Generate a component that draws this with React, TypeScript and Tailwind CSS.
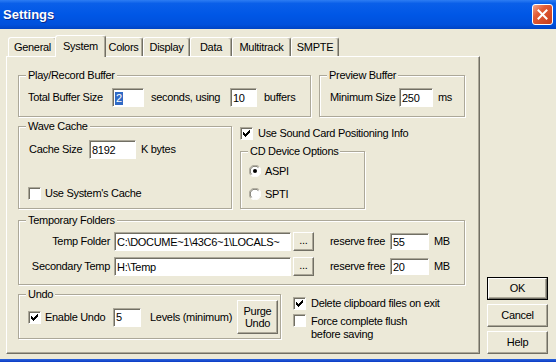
import type { ReactNode } from 'react';

const raised =
  'border border-t-white border-l-white border-r-[#716f64] border-b-[#716f64] shadow-[inset_-1px_-1px_0_#aca899] bg-[#ece9d8]';
const sunken =
  'border border-t-[#aca899] border-l-[#aca899] border-r-white border-b-white shadow-[inset_1px_1px_0_#716f64]';

function Field({ className, children }: { className: string; children?: ReactNode }) {
  return (
    <div className={`${sunken} ${className} flex items-center bg-white pl-[2px] pt-[1px] overflow-hidden whitespace-nowrap shrink-0`}>
      {children}
    </div>
  );
}

function Check({ checked }: { checked?: boolean }) {
  return (
    <span className={`${sunken} w-[13px] h-[13px] bg-white flex items-center justify-center shrink-0`}>
      {checked && (
        <svg width="7" height="7" viewBox="0 0 7 7" shapeRendering="crispEdges">
          <polygon points="0,2 2,4 7,-1 7,2 2,7 0,5" fill="#000" />
        </svg>
      )}
    </span>
  );
}

function Radio({ on }: { on?: boolean }) {
  return (
    <svg width="12" height="12" viewBox="0 0 12 12" className="shrink-0">
      <circle cx="6" cy="6" r="5.5" fill="#fff" />
      <path d="M1.8 10.2 A5.5 5.5 0 0 1 10.2 1.8" stroke="#aca899" fill="none" />
      <path d="M2.6 9.4 A4.5 4.5 0 0 1 9.4 2.6" stroke="#716f64" fill="none" />
      <path d="M10.2 1.8 A5.5 5.5 0 0 1 1.8 10.2" stroke="#fff" fill="none" />
      {on && <circle cx="6" cy="6" r="2" fill="#000" />}
    </svg>
  );
}

function Group({ label, className, children }: { label: string; className: string; children?: ReactNode }) {
  return (
    <div className={`relative border border-[#aca899] shadow-[1px_1px_0_#fff,inset_1px_1px_0_#fff] shrink-0 ${className}`}>
      <span className="absolute -top-[7px] left-[7px] bg-[#ece9d8] px-[2px] whitespace-nowrap">{label}</span>
      {children}
    </div>
  );
}

const tabs = [
  { label: 'General', cls: 'w-[49px] h-[19px]' },
  { label: 'System', cls: 'w-[51px] h-[22px] -mx-[2px] -mb-[1px] relative z-10 bg-[#ece9d8]', active: true },
  { label: 'Colors', cls: 'w-[39px] h-[19px]' },
  { label: 'Display', cls: 'w-[47px] h-[19px]' },
  { label: 'Data', cls: 'w-[42px] h-[19px]' },
  { label: 'Multitrack', cls: 'w-[59px] h-[19px]' },
  { label: 'SMPTE', cls: 'w-[48px] h-[19px]' },
];

export default function App() {
  return (
    <div className="w-[556px] h-[362px] bg-[#ece9d8] flex flex-col overflow-hidden font-['Liberation_Sans',Arial,sans-serif] text-[11px] leading-[13px] tracking-[-0.3px] text-black">
      {/* title bar */}
      <div className="h-[29px] shrink-0 flex items-center justify-between pl-[3px] pr-[3px] bg-[linear-gradient(180deg,#2d7df3_0%,#0a5fe9_12%,#0057e6_50%,#0050dc_85%,#0043c4_100%)]">
        <span className="text-white font-bold text-[13px] tracking-normal [text-shadow:1px_1px_0_#0a2a8a]">Settings</span>
        <div className="w-[21px] h-[21px] rounded-[3px] border border-white bg-[linear-gradient(135deg,#f4a88d_0%,#e35c37_35%,#c63c1b_100%)] flex items-center justify-center">
          <svg width="11" height="11" viewBox="0 0 11 11">
            <path d="M1.5 1.5 L9.5 9.5 M9.5 1.5 L1.5 9.5" stroke="#fff" strokeWidth="2" strokeLinecap="square" />
          </svg>
        </div>
      </div>

      <div className="flex flex-1">
        {/* tab control */}
        <div className="flex flex-col pl-[6px] pt-[6px]">
          <div className="flex items-end h-[21px] pl-[2px]">
            {tabs.map((t) => (
              <div
                key={t.label}
                className={`${t.cls} border-t border-l border-white border-r border-r-[#716f64] shadow-[inset_-1px_0_0_#aca899] rounded-t-[3px] flex items-center justify-center whitespace-nowrap`}
              >
                {t.label}
              </div>
            ))}
          </div>

          <div className="w-[474px] h-[298px] border border-t-white border-l-white border-r-[#716f64] border-b-[#716f64] shadow-[inset_-1px_-1px_0_#aca899] flex flex-col pl-[11px]">
            {/* buffers */}
            <div className="flex items-start mt-[18px]">
              <Group label="Play/Record Buffer" className="w-[293px] h-[42px]">
                <div className="flex items-center pl-[9px] mt-[12px]">
                  <span className="w-[84px] whitespace-nowrap">Total Buffer Size</span>
                  <Field className="w-[32px] h-[19px]">
                    <span className="bg-[#316ac5] text-white px-[1px]">2</span>
                  </Field>
                  <span className="w-[86px] pl-[7px] whitespace-nowrap">seconds, using</span>
                  <Field className="w-[27px] h-[19px]">10</Field>
                  <span className="pl-[7px]">buffers</span>
                </div>
              </Group>
              <Group label="Preview Buffer" className="w-[146px] h-[42px] ml-[8px]">
                <div className="flex items-center pl-[10px] mt-[12px]">
                  <span className="w-[69px] whitespace-nowrap">Minimum Size</span>
                  <Field className="w-[34px] h-[19px]">250</Field>
                  <span className="pl-[5px]">ms</span>
                </div>
              </Group>
            </div>

            {/* cache and cd */}
            <div className="flex items-start mt-[9px]">
              <Group label="Wave Cache" className="w-[214px] h-[83px]">
                <div className="flex items-center pl-[10px] mt-[13px]">
                  <span className="w-[60px] whitespace-nowrap">Cache Size</span>
                  <Field className="w-[47px] h-[19px]">8192</Field>
                  <span className="pl-[5px]">K bytes</span>
                </div>
                <div className="flex items-center pl-[9px] mt-[28px]">
                  <Check />
                  <span className="ml-[4px] whitespace-nowrap">Use System's Cache</span>
                </div>
              </Group>
              <div className="flex flex-col ml-[8px]">
                <div className="flex items-center h-[13px] mt-[1px]">
                  <Check checked />
                  <span className="ml-[5px] whitespace-nowrap">Use Sound Card Positioning Info</span>
                </div>
                <Group label="CD Device Options" className="w-[125px] h-[58px] mt-[11px]">
                  <div className="flex items-center pl-[8px] mt-[13px] h-[12px]">
                    <Radio on />
                    <span className="ml-[4px]">ASPI</span>
                  </div>
                  <div className="flex items-center pl-[8px] mt-[11px] h-[12px]">
                    <Radio />
                    <span className="ml-[4px]">SPTI</span>
                  </div>
                </Group>
              </div>
            </div>

            {/* temp folders */}
            <Group label="Temporary Folders" className="w-[447px] h-[65px] mt-[11px]">
              <div className="flex items-center mt-[11px]">
                <span className="w-[95px] pr-[4px] text-right whitespace-nowrap">Temp Folder</span>
                <Field className="w-[177px] h-[19px]">C:\DOCUME~1\43C6~1\LOCALS~</Field>
                <div className={`${raised} w-[21px] h-[19px] ml-[2px] flex items-center justify-center pb-[2px]`}>...</div>
                <span className="w-[60px] ml-[16px] whitespace-nowrap">reserve free</span>
                <Field className="w-[39px] h-[17px]">55</Field>
                <span className="ml-[5px]">MB</span>
              </div>
              <div className="flex items-center mt-[6px]">
                <span className="w-[95px] pr-[4px] text-right whitespace-nowrap">Secondary Temp</span>
                <Field className="w-[177px] h-[19px]">H:\Temp</Field>
                <div className={`${raised} w-[21px] h-[19px] ml-[2px] flex items-center justify-center pb-[2px]`}>...</div>
                <span className="w-[60px] ml-[16px] whitespace-nowrap">reserve free</span>
                <Field className="w-[39px] h-[17px]">20</Field>
                <span className="ml-[5px]">MB</span>
              </div>
            </Group>

            {/* undo */}
            <div className="flex items-start mt-[9px]">
              <Group label="Undo" className="w-[263px] h-[45px]">
                <div className="flex items-center pl-[9px] h-[43px] pt-[1px]">
                  <Check checked />
                  <span className="ml-[4px] w-[68px] whitespace-nowrap">Enable Undo</span>
                  <Field className="w-[28px] h-[19px]">5</Field>
                  <span className="pl-[9px] w-[96px] whitespace-nowrap">Levels (minimum)</span>
                  <div className={`${raised} w-[41px] h-[34px] flex flex-col items-center justify-center leading-[12px]`}>
                    <span>Purge</span>
                    <span>Undo</span>
                  </div>
                </div>
              </Group>
              <div className="flex flex-col ml-[12px] mt-[3px]">
                <div className="flex items-center h-[13px]">
                  <Check checked />
                  <span className="ml-[5px] whitespace-nowrap">Delete clipboard files on exit</span>
                </div>
                <div className="flex items-start mt-[4px]">
                  <Check />
                  <span className="ml-[5px] pt-[1px]">
                    Force complete flush
                    <br />
                    before saving
                  </span>
                </div>
              </div>
            </div>
          </div>
        </div>

        {/* dialog buttons */}
        <div className="flex flex-col justify-end gap-[4px] ml-[7px] pb-[5px]">
          <div className="w-[61px] h-[23px] border border-black flex">
            <div className={`${raised} flex-1 flex items-center justify-center`}>OK</div>
          </div>
          <div className={`${raised} w-[61px] h-[23px] flex items-center justify-center`}>Cancel</div>
          <div className={`${raised} w-[61px] h-[23px] flex items-center justify-center`}>Help</div>
        </div>
      </div>

      <div className="h-[3px] shrink-0 bg-[linear-gradient(180deg,#2a62dc,#0a3cc4)]" />
    </div>
  );
}
